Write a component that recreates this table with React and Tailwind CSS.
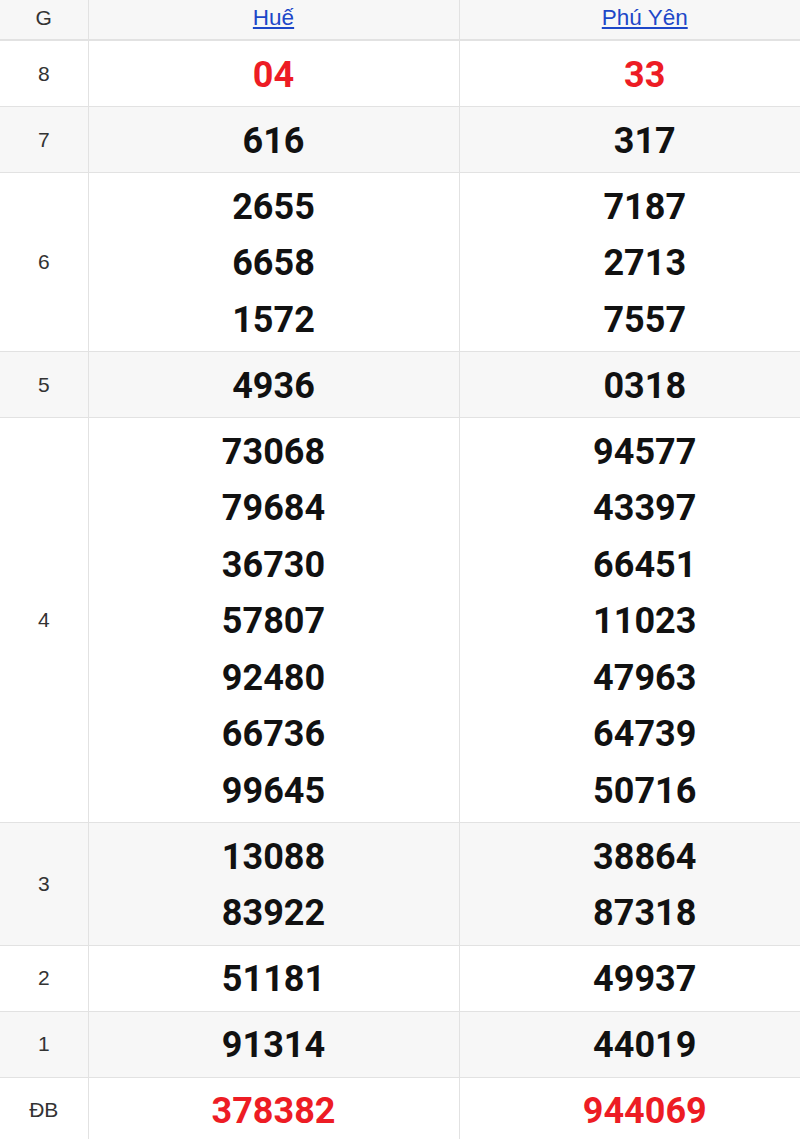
import React from "react";

const rows = [
  { g: "8", a: ["04"], b: ["33"], red: true },
  { g: "7", a: ["616"], b: ["317"] },
  { g: "6", a: ["2655", "6658", "1572"], b: ["7187", "2713", "7557"] },
  { g: "5", a: ["4936"], b: ["0318"] },
  {
    g: "4",
    a: ["73068", "79684", "36730", "57807", "92480", "66736", "99645"],
    b: ["94577", "43397", "66451", "11023", "47963", "64739", "50716"],
  },
  { g: "3", a: ["13088", "83922"], b: ["38864", "87318"] },
  { g: "2", a: ["51181"], b: ["49937"] },
  { g: "1", a: ["91314"], b: ["44019"] },
  { g: "ĐB", a: ["378382"], b: ["944069"], red: true },
];

const Cell = ({ nums, red }) => (
  <td className="border-l border-[#e2e2e2] pt-[5.5px] pb-[3px] text-center align-middle">
    {nums.map((n) => (
      <div
        key={n}
        className={`font-['Roboto',sans-serif] text-[36px] font-bold leading-[56.5px] ${
          red ? "text-[#ed1c24]" : "text-[#111]"
        }`}
      >
        {n}
      </div>
    ))}
  </td>
);

export default function App() {
  return (
    <div className="w-[800px] overflow-hidden bg-white">
      <table className="w-[830px] table-fixed border-collapse font-['Liberation_Sans',Arial,sans-serif]">
        <colgroup>
          <col className="w-[88px]" />
          <col className="w-[371px]" />
          <col className="w-[371px]" />
        </colgroup>
        <thead>
          <tr className="h-[40px] border-b-2 border-[#e2e2e2] bg-[#f7f7f7]">
            <th className="pb-[3px] text-[21px] font-normal text-[#333]">G</th>
            <th className="border-l border-[#e2e2e2] pb-[3px] font-normal">
              <a href="#" className="text-[22.5px] text-[#1d47c8] underline">
                Huế
              </a>
            </th>
            <th className="border-l border-[#e2e2e2] pb-[3px] font-normal">
              <a href="#" className="text-[22.5px] text-[#1d47c8] underline">
                Phú Yên
              </a>
            </th>
          </tr>
        </thead>
        <tbody>
          {rows.map((r, i) => (
            <tr
              key={r.g}
              className={`border-b border-[#e2e2e2] ${i % 2 === 1 ? "bg-[#f7f7f7]" : "bg-white"}`}
            >
              <td className="text-center align-middle text-[21px] text-[#333]">{r.g}</td>
              <Cell nums={r.a} red={r.red} />
              <Cell nums={r.b} red={r.red} />
            </tr>
          ))}
        </tbody>
      </table>
    </div>
  );
}
